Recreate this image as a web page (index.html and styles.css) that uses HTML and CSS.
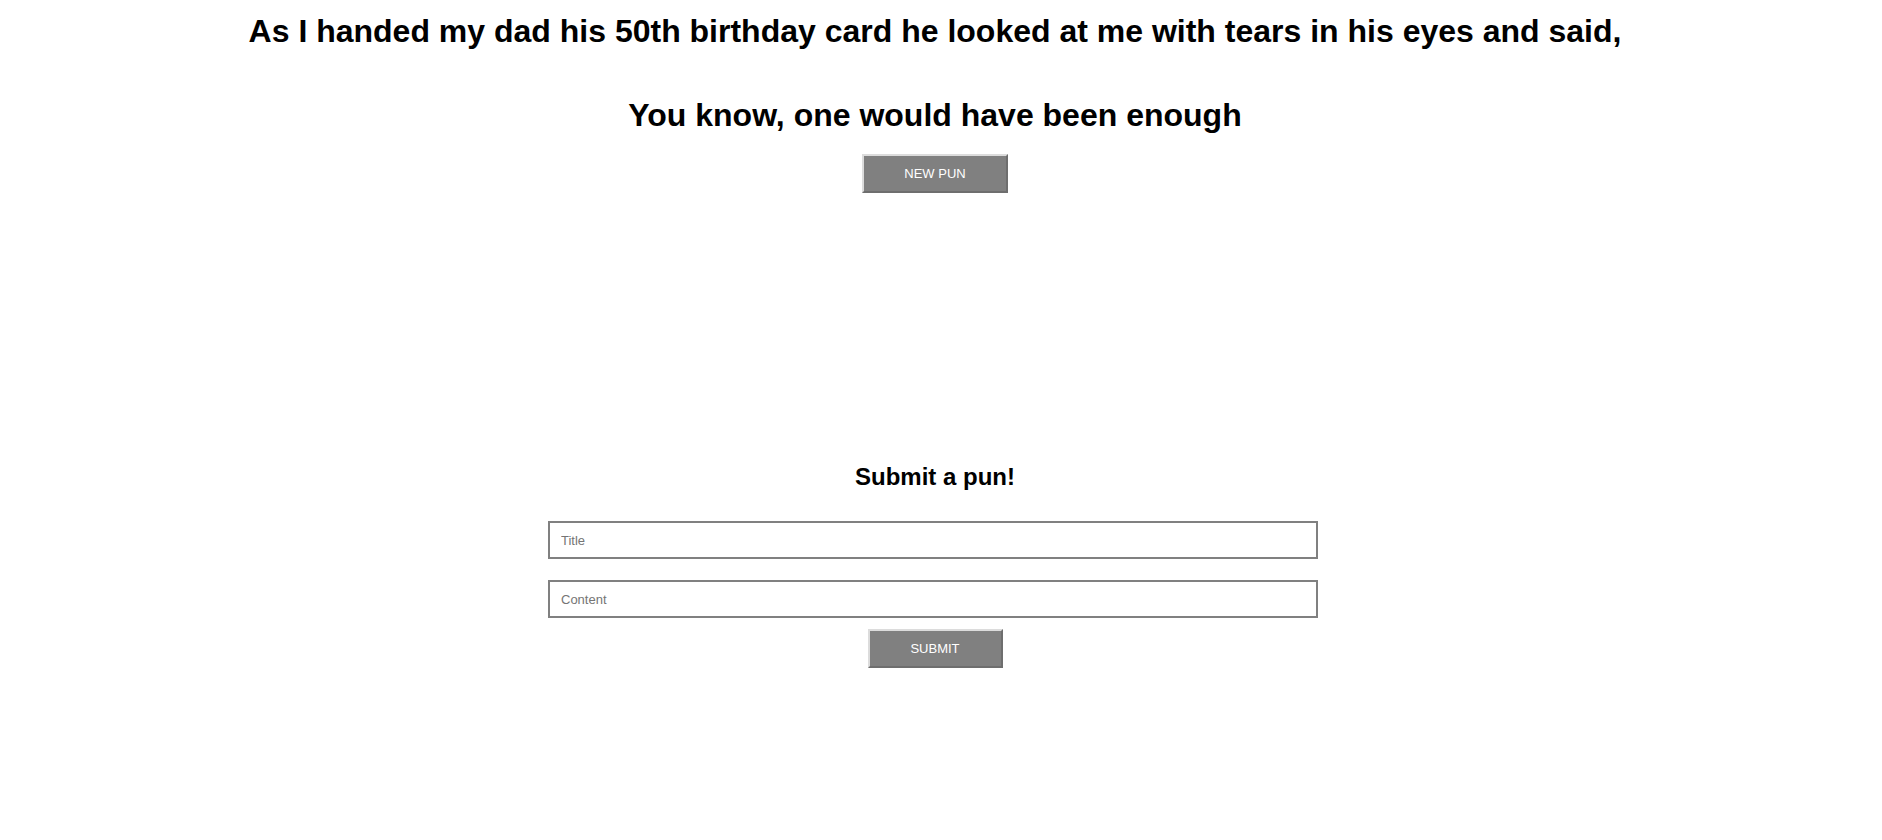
FILE: index.html
```html
<!DOCTYPE html>
<html>
<head>
<meta charset="utf-8">
<title>Puns</title>
<link rel="stylesheet" href="styles.css">
</head>
<body>
<main class="page">
  <section class="pun">
    <h1 class="pun-line">As I handed my dad his 50th birthday card he looked at me with tears in his eyes and said,</h1>
    <h1 class="pun-line pun-punchline">You know, one would have been enough</h1>
    <button class="btn btn-new">NEW PUN</button>
  </section>
  <section class="submit">
    <h2 class="submit-title">Submit a pun!</h2>
    <form class="submit-form">
      <input class="field field-title" type="text" placeholder="Title">
      <input class="field field-content" type="text" placeholder="Content">
      <button type="button" class="btn btn-submit">SUBMIT</button>
    </form>
  </section>
</main>
</body>
</html>
```

FILE: styles.css
```css
html, body {
  margin: 0;
  padding: 0;
  background: #ffffff;
}

body {
  font-family: "Liberation Sans", Arial, sans-serif;
  color: #000000;
}

.page {
  display: flex;
  flex-direction: column;
  align-items: center;
  padding: 13px 12px 0 0;
  text-align: center;
}

.pun {
  display: flex;
  flex-direction: column;
  align-items: center;
}

.pun-line {
  margin: 0;
  font-size: 32px;
  font-weight: bold;
  line-height: 36px;
  white-space: nowrap;
}

.pun-punchline {
  margin-top: 48px;
}

.btn {
  box-sizing: border-box;
  height: 39px;
  padding: 0 40px;
  background: #808080;
  color: #ffffff;
  font-family: "Liberation Sans", Arial, sans-serif;
  font-size: 13px;
  border-style: solid;
  border-width: 2px;
  border-color: #dcdcdc #6e6e6e #6e6e6e #dcdcdc;
  cursor: pointer;
}

.btn-new {
  margin-top: 21px;
  width: 146px;
}

.submit {
  display: flex;
  flex-direction: column;
  align-items: center;
  margin-top: 270px;
}

.submit-title {
  margin: 0;
  font-size: 24px;
  font-weight: bold;
  line-height: 28px;
}

.submit-form {
  display: flex;
  flex-direction: column;
  align-items: center;
  margin-top: 30px;
}

.field {
  box-sizing: border-box;
  width: 770px;
  height: 38px;
  margin: 0 4px 0 0;
  padding: 0 11px;
  border: 2px solid #808080;
  background: #ffffff;
  font-family: "Liberation Sans", Arial, sans-serif;
  font-size: 13px;
  color: #000;
  outline: none;
}

.field::placeholder {
  color: #757575;
}

.field-content {
  margin-top: 21px;
}

.btn-submit {
  margin-top: 11px;
  width: 135px;
}
```
